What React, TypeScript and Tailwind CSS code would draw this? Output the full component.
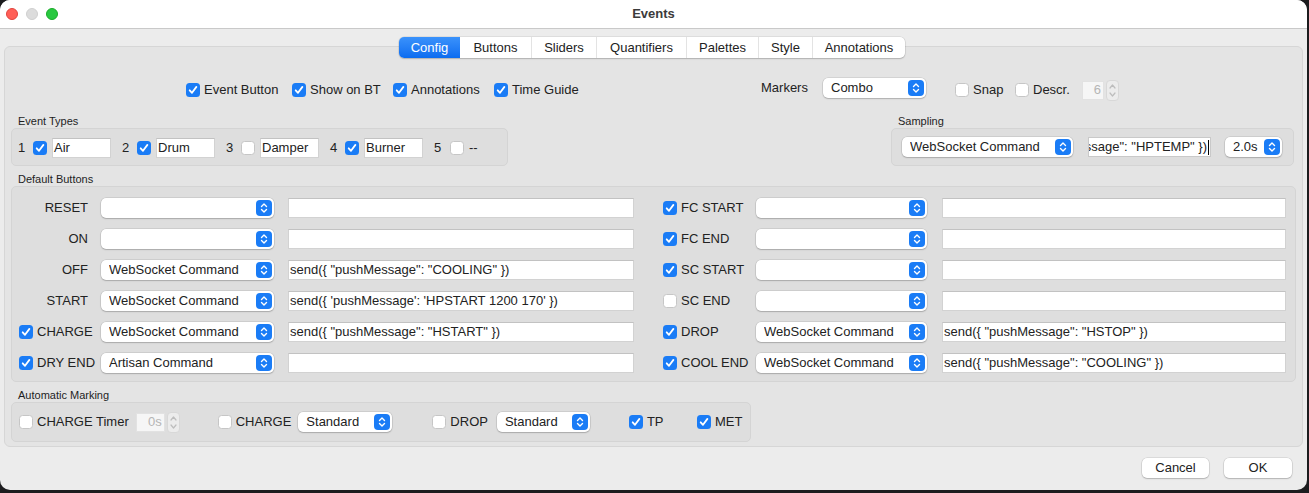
import React from "react";

// small mac-style widgets

function Check({ on }: { on?: boolean }) {
  if (on) {
    return (
      <span className="flex h-[14px] w-[14px] shrink-0 items-center justify-center rounded-[3.5px] bg-[#1a7cf6]">
        <svg width="10" height="10" viewBox="0 0 10 10">
          <path d="M1.7 5.3 L4 7.8 L8.4 1.9" fill="none" stroke="#fff" strokeWidth="1.8" strokeLinecap="round" strokeLinejoin="round" />
        </svg>
      </span>
    );
  }
  return <span className="h-[14px] w-[14px] shrink-0 rounded-[3.5px] border border-[#c6c6c6] bg-white" />;
}

function CheckLabel({ on, label }: { on?: boolean; label: string }) {
  return (
    <div className="flex items-center gap-[4px] whitespace-nowrap">
      <Check on={on} />
      <span>{label}</span>
    </div>
  );
}

function Stepper() {
  return (
    <span className="flex h-[16px] w-[16px] shrink-0 items-center justify-center rounded-[4px] bg-[#1a7cf6]">
      <svg width="10" height="12" viewBox="0 0 10 12">
        <path d="M2.5 4.5 L5 2 L7.5 4.5" fill="none" stroke="#fff" strokeWidth="1.4" strokeLinecap="round" strokeLinejoin="round" />
        <path d="M2.5 7.5 L5 10 L7.5 7.5" fill="none" stroke="#fff" strokeWidth="1.4" strokeLinecap="round" strokeLinejoin="round" />
      </svg>
    </span>
  );
}

function Combo({ w, text }: { w: string; text?: string }) {
  return (
    <div className={`${w} flex h-[20px] shrink-0 items-center justify-between rounded-[5px] bg-white pl-[8px] pr-[2px] shadow-[0_0_0_0.5px_rgba(0,0,0,0.14),0_1px_1.5px_rgba(0,0,0,0.18)]`}>
      <span className="truncate">{text}</span>
      <Stepper />
    </div>
  );
}

function Field({ w, text }: { w: string; text?: string }) {
  return (
    <div className={`${w} flex h-[20px] shrink-0 items-center overflow-hidden whitespace-nowrap border border-[#d2d2d2] border-t-[#c2c2c2] bg-white pl-[1px]`}>
      {text}
    </div>
  );
}

function Spin({ fw, value }: { fw: string; value: string }) {
  return (
    <div className="flex items-center gap-[2px]">
      <div className={`${fw} flex h-[19px] items-center justify-end border border-[#e2e2e2] bg-[#f6f6f6] pr-[2px] text-[#b5b5b5]`}>
        {value}
      </div>
      <span className="flex h-[21px] w-[13px] items-center justify-center rounded-[4px] border border-[#d8d8d8] bg-[#ececec]">
        <svg width="9" height="17" viewBox="0 0 9 17">
          <path d="M2 6 L4.5 3 L7 6" fill="none" stroke="#bdbdbd" strokeWidth="1.2" strokeLinecap="round" strokeLinejoin="round" />
          <path d="M2 11 L4.5 14 L7 11" fill="none" stroke="#bdbdbd" strokeWidth="1.2" strokeLinecap="round" strokeLinejoin="round" />
        </svg>
      </span>
    </div>
  );
}

function GroupLabel({ children }: { children: React.ReactNode }) {
  return <div className="h-[13px] pl-[7px] text-[11px] leading-[13px] text-[#1e1e1e]">{children}</div>;
}

const tabs = [
  { name: "Config", w: "w-[61px]" },
  { name: "Buttons", w: "w-[71px]" },
  { name: "Sliders", w: "w-[65px]" },
  { name: "Quantifiers", w: "w-[90px]" },
  { name: "Palettes", w: "w-[72px]" },
  { name: "Style", w: "w-[54px]" },
  { name: "Annotations", w: "w-[93px]" },
];

const eventTypes = [
  { n: "1", on: true, text: "Air" },
  { n: "2", on: true, text: "Drum" },
  { n: "3", on: false, text: "Damper" },
  { n: "4", on: true, text: "Burner" },
];

type Row = { label: string; check?: boolean; on?: boolean; action: string; cmd: string };

const leftRows: Row[] = [
  { label: "RESET", action: "", cmd: "" },
  { label: "ON", action: "", cmd: "" },
  { label: "OFF", action: "WebSocket Command", cmd: 'send({ "pushMessage": "COOLING" })' },
  { label: "START", action: "WebSocket Command", cmd: "send({ 'pushMessage': 'HPSTART 1200 170' })" },
  { label: "CHARGE", check: true, on: true, action: "WebSocket Command", cmd: 'send({ "pushMessage": "HSTART" })' },
  { label: "DRY END", check: true, on: true, action: "Artisan Command", cmd: "" },
];

const rightRows: Row[] = [
  { label: "FC START", on: true, action: "", cmd: "" },
  { label: "FC END", on: true, action: "", cmd: "" },
  { label: "SC START", on: true, action: "", cmd: "" },
  { label: "SC END", on: false, action: "", cmd: "" },
  { label: "DROP", on: true, action: "WebSocket Command", cmd: 'send({ "pushMessage": "HSTOP" })' },
  { label: "COOL END", on: true, action: "WebSocket Command", cmd: 'send({ "pushMessage": "COOLING" })' },
];

export default function App() {
  return (
    <div className="h-[493px] w-[1309px] bg-[#1c1c1e] font-['Liberation_Sans',Arial,sans-serif] text-[13px] leading-[16px] text-[#222]">
      <div className="h-[490px] w-[1307px] overflow-hidden rounded-[10px] bg-[#ececec]">
        {/* title bar */}
        <div className="flex h-[29px] items-center border-b border-[#c9c9c9] bg-white">
          <div className="flex items-center gap-[8px] pl-[6px]">
            <span className="h-[12px] w-[12px] rounded-full border border-[#e0443e] bg-[#ff5f57]" />
            <span className="h-[12px] w-[12px] rounded-full border border-[#cfcfcf] bg-[#dcdcdc]" />
            <span className="h-[12px] w-[12px] rounded-full border border-[#1aab29] bg-[#28c840]" />
          </div>
          <div className="flex-1 pr-[58px] text-center font-bold text-[#3b3b3b]">Events</div>
        </div>

        {/* tab bar */}
        <div className="relative z-10 ml-[399px] mt-[8px] flex h-[21px] w-[506px] overflow-hidden rounded-[5px] bg-white shadow-[0_0_0_0.5px_rgba(0,0,0,0.12),0_1px_1.5px_rgba(0,0,0,0.18)]">
          {tabs.map((t, i) => (
            <div
              key={t.name}
              className={`${t.w} flex items-center justify-center ${
                i === 0
                  ? "bg-gradient-to-b from-[#3a92fb] to-[#0a6cf0] text-white"
                  : "border-l border-[#e3e3e3] text-[#222]"
              } ${i === 1 ? "border-l-0" : ""}`}
            >
              {t.name}
            </div>
          ))}
        </div>

        {/* tab panel */}
        <div className="-mt-[12px] ml-[4px] h-[401px] w-[1299px] rounded-[6px] border border-[#d6d6d6] bg-[#e4e4e4]">
          {/* top options */}
          <div className="mt-[33px] flex h-[20px] items-center pl-[181px]">
            <div className="w-[106px]"><CheckLabel on label="Event Button" /></div>
            <div className="w-[101px]"><CheckLabel on label="Show on BT" /></div>
            <div className="w-[101px]"><CheckLabel on label="Annotations" /></div>
            <div className="w-[267px]"><CheckLabel on label="Time Guide" /></div>
            <span className="-mt-[4px] w-[62px]">Markers</span>
            <div className="-mt-[4px]"><Combo w="w-[103px]" text="Combo" /></div>
            <div className="ml-[29px] w-[60px]"><CheckLabel label="Snap" /></div>
            <div className="w-[67px]"><CheckLabel label="Descr." /></div>
            <Spin fw="w-[22px]" value="6" />
          </div>

          {/* event types + sampling */}
          <div className="mt-[15px] flex">
            <div className="ml-[6px] w-[497px]">
              <GroupLabel>Event Types</GroupLabel>
              <div className="flex h-[38px] items-center rounded-[5px] border border-[#d4d4d4] bg-[#dedede] pl-[6px] pt-[1px]">
                {eventTypes.map((e) => (
                  <div key={e.n} className="mr-[11px] flex items-center">
                    <span className="w-[15px]">{e.n}</span>
                    <Check on={e.on} />
                    <div className="ml-[5px]"><Field w="w-[59px]" text={e.text} /></div>
                  </div>
                ))}
                <div className="flex items-center">
                  <span className="w-[16px]">5</span>
                  <Check />
                  <span className="ml-[5px]">--</span>
                </div>
              </div>
            </div>
            <div className="ml-[383px] w-[403px]">
              <GroupLabel>Sampling</GroupLabel>
              <div className="flex h-[38px] items-center rounded-[5px] border border-[#d4d4d4] bg-[#dedede] pl-[10px]">
                <Combo w="w-[171px]" text="WebSocket Command" />
                <div className="ml-[15px] flex h-[20px] w-[123px] items-center justify-end overflow-hidden whitespace-nowrap border border-[#c9c9c9] bg-white pr-[1px]">
                  <span>send({"{"} "pushMessage": "HPTEMP" {"}"})</span>
                  <span className="ml-[1px] h-[15px] w-[1px] shrink-0 bg-black" />
                </div>
                <div className="ml-[14px]"><Combo w="w-[57px]" text="2.0s" /></div>
              </div>
            </div>
          </div>

          {/* default buttons */}
          <div className="ml-[6px] mt-[7px] w-[1285px]">
            <GroupLabel>Default Buttons</GroupLabel>
            <div className="flex h-[196px] gap-[29px] rounded-[5px] border border-[#d4d4d4] bg-[#dedede] pt-[11px]">
              <div className="flex flex-col gap-[11px]">
                {leftRows.map((r) => (
                  <div key={r.label} className="flex h-[20px] items-center">
                    {r.check ? (
                      <div className="w-[89px] pl-[7px]"><CheckLabel on={r.on} label={r.label} /></div>
                    ) : (
                      <div className="w-[89px] pr-[13px] text-right">{r.label}</div>
                    )}
                    <Combo w="w-[173px]" text={r.action} />
                    <div className="ml-[14px]"><Field w="w-[346px]" text={r.cmd} /></div>
                  </div>
                ))}
              </div>
              <div className="flex flex-col gap-[11px]">
                {rightRows.map((r) => (
                  <div key={r.label} className="flex h-[20px] items-center">
                    <div className="w-[93px]"><CheckLabel on={r.on} label={r.label} /></div>
                    <Combo w="w-[171px]" text={r.action} />
                    <div className="ml-[15px]"><Field w="w-[344px]" text={r.cmd} /></div>
                  </div>
                ))}
              </div>
            </div>
          </div>

          {/* automatic marking */}
          <div className="ml-[6px] mt-[7px] w-[740px]">
            <GroupLabel>Automatic Marking</GroupLabel>
            <div className="flex h-[40px] items-center rounded-[5px] border border-[#d4d4d4] bg-[#dedede] pl-[7px]">
              <CheckLabel label="CHARGE Timer" />
              <div className="ml-[7px]"><Spin fw="w-[29px]" value="0s" /></div>
              <div className="ml-[38px]"><CheckLabel label="CHARGE" /></div>
              <div className="ml-[7px]"><Combo w="w-[94px]" text="Standard" /></div>
              <div className="ml-[40px]"><CheckLabel label="DROP" /></div>
              <div className="ml-[9px]"><Combo w="w-[93px]" text="Standard" /></div>
              <div className="ml-[39px] w-[68px]"><CheckLabel on label="TP" /></div>
              <CheckLabel on label="MET" />
            </div>
          </div>
        </div>

        {/* dialog buttons */}
        <div className="mt-[11px] flex justify-end gap-[15px] pr-[15px]">
          <button className="flex h-[20px] w-[67px] items-center justify-center rounded-[5px] bg-white shadow-[0_0_0_0.5px_rgba(0,0,0,0.14),0_1px_1.5px_rgba(0,0,0,0.18)]">
            Cancel
          </button>
          <button className="flex h-[20px] w-[68px] items-center justify-center rounded-[5px] bg-white shadow-[0_0_0_0.5px_rgba(0,0,0,0.14),0_1px_1.5px_rgba(0,0,0,0.18)]">
            OK
          </button>
        </div>
      </div>
    </div>
  );
}
